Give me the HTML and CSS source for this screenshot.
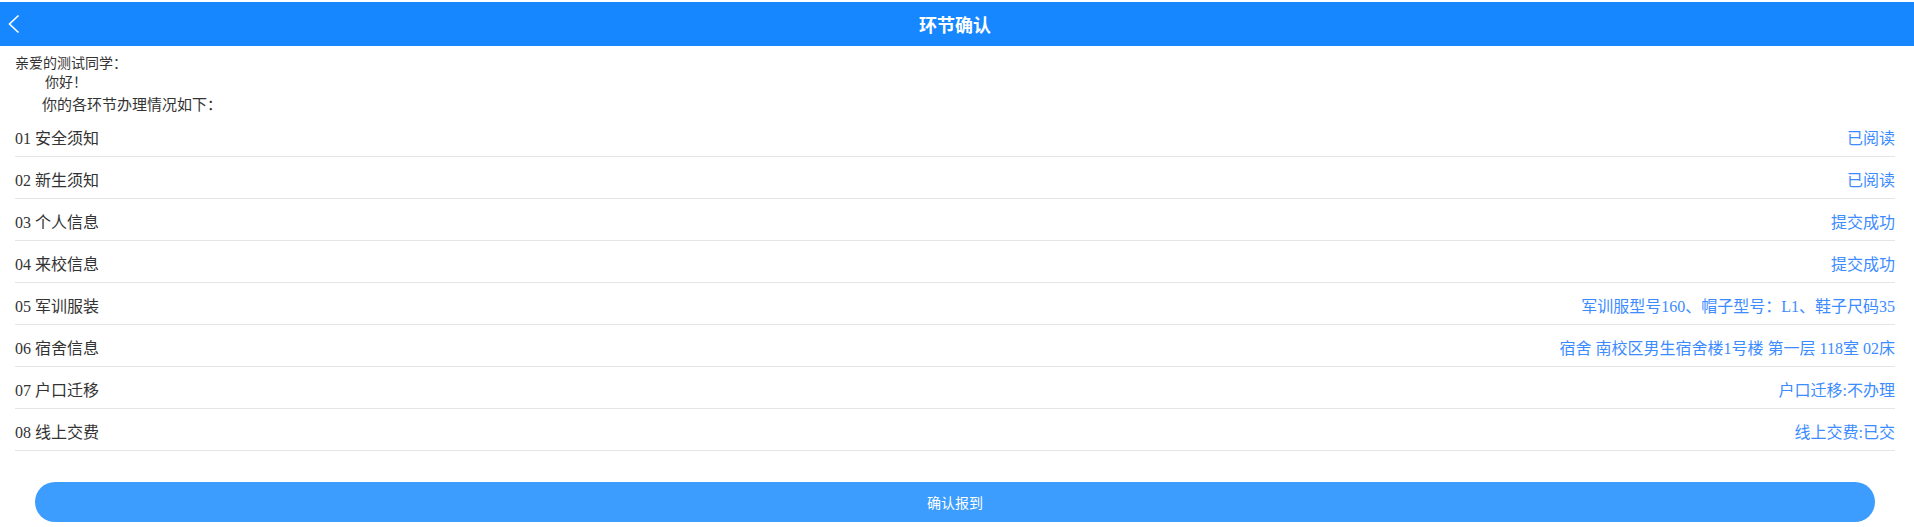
FILE: index.html
```html
<!DOCTYPE html>
<html lang="zh-CN">
<head>
    <meta charset="UTF-8">
    <meta name="viewport" content="width=device-width, initial-scale=1.0">
    <title>环节确认</title>
    <link rel="stylesheet" href="styles.css">
</head>
<body>
<div class="page">
    <!-- Top bar -->
    <div class="header">
        <span class="back">
            <svg width="12" height="20" viewBox="0 0 12 20">
                <path d="M10.5 1.5 L1.5 10 L10.5 18.5" fill="none" stroke="#fff" stroke-width="1.6"/>
            </svg>
        </span>
        <div class="title">环节确认</div>
    </div>

    <!-- Greeting -->
    <div class="greeting">
        <div class="greet-name">亲爱的测试同学<span class="punct">：</span></div>
        <div class="greet-hello">你好<span class="punct">！</span></div>
        <div class="greet-intro">你的各环节办理情况如下<span class="punct">：</span></div>
    </div>

    <!-- Step list -->
    <ul class="step-list">
        <li class="step"><span class="step-name">01 安全须知</span><span class="step-state">已阅读</span></li>
        <li class="step"><span class="step-name">02 新生须知</span><span class="step-state">已阅读</span></li>
        <li class="step"><span class="step-name">03 个人信息</span><span class="step-state">提交成功</span></li>
        <li class="step"><span class="step-name">04 来校信息</span><span class="step-state">提交成功</span></li>
        <li class="step"><span class="step-name">05 军训服装</span><span class="step-state">军训服型号160、帽子型号<span class="punct">：</span>L1、鞋子尺码35</span></li>
        <li class="step"><span class="step-name">06 宿舍信息</span><span class="step-state">宿舍 南校区男生宿舍楼1号楼 第一层 118室 02床</span></li>
        <li class="step"><span class="step-name">07 户口迁移</span><span class="step-state">户口迁移:不办理</span></li>
        <li class="step"><span class="step-name">08 线上交费</span><span class="step-state">线上交费:已交</span></li>
    </ul>

    <div class="actions">
        <button class="confirm-button">确认报到</button>
    </div>
</div>
</body>
</html>
```

FILE: styles.css
```css
body {
    margin: 0;
    font-family: "Liberation Serif", "Noto Sans CJK SC", serif;
    color: #333;
    background-color: #fff;
}
.page {
    padding-top: 2px;
}
.header {
    height: 44px;
    background-color: #1787ff;
    display: flex;
    align-items: center;
    justify-content: center;
    position: relative;
    padding-right: 4px;
}
.back {
    position: absolute;
    left: 8px;
    top: 12px;
    width: 12px;
    height: 20px;
}
.back svg {
    display: block;
}
.title {
    color: #fff;
    font-family: "Noto Sans CJK SC", sans-serif;
    font-size: 18px;
    font-weight: bold;
}
.greeting {
    padding: 7px 0 0 15px;
    font-family: "Noto Sans CJK SC", sans-serif;
    color: #333;
}
/* centred full-width punctuation */
.punct {
    font-family: "Noto Sans CJK TC", sans-serif;
}
.greet-name {
    font-size: 14px;
    line-height: 19px;
}
.greet-hello {
    font-size: 14px;
    line-height: 19px;
    padding-left: 30px;
}
.greet-intro {
    font-size: 15px;
    line-height: 22px;
    padding-top: 2px;
    padding-left: 27px;
}
.step-list {
    list-style: none;
    margin: 0 19px 0 15px;
    padding: 0;
}
.step {
    display: flex;
    justify-content: space-between;
    align-items: center;
    height: 42px;
    padding-top: 3px;
    box-sizing: border-box;
    border-bottom: 1px solid #e5e5e5;
    font-size: 16px;
}
.step-name {
    color: #333;
}
.step-state {
    color: #3c8cff;
}
.actions {
    padding: 31px 39px 0 35px;
}
.confirm-button {
    display: block;
    width: 100%;
    height: 40px;
    border: none;
    border-radius: 20px;
    background-color: #3d9dff;
    color: #fff;
    font-family: "Noto Sans CJK SC", sans-serif;
    font-size: 14px;
    cursor: pointer;
}
```
